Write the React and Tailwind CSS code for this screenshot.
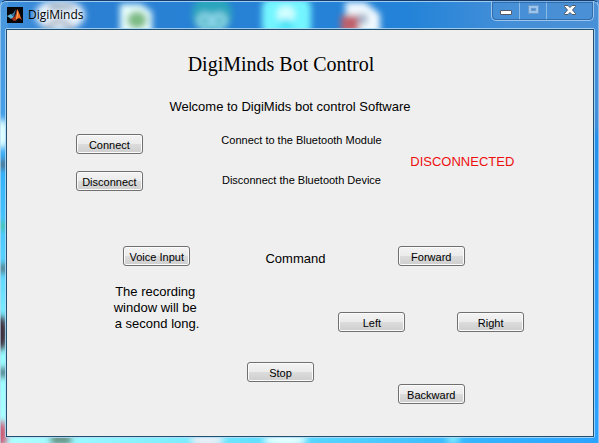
import React from "react";

const SANS = "font-['Liberation_Sans',Arial,sans-serif]";

function Wallpaper() {
  return (
    <svg
      className="absolute inset-0 h-full w-full"
      viewBox="0 0 599 443"
      preserveAspectRatio="none"
      aria-hidden="true"
    >
      <defs>
        <linearGradient id="top" x1="0" x2="1" y1="0" y2="0">
          <stop offset="0" stopColor="#3f8fdb" />
          <stop offset="0.15" stopColor="#2b80d3" />
          <stop offset="0.68" stopColor="#2383d8" />
          <stop offset="0.85" stopColor="#448fd8" />
          <stop offset="1" stopColor="#4a90d6" />
        </linearGradient>
        <linearGradient id="left" x1="0" x2="0" y1="0" y2="1">
          <stop offset="0" stopColor="#4a96dc" />
          <stop offset="0.26" stopColor="#469fe8" />
          <stop offset="0.4" stopColor="#35b4fb" />
          <stop offset="0.6" stopColor="#59d5ff" />
          <stop offset="0.78" stopColor="#93fbff" />
          <stop offset="1" stopColor="#b0ffff" />
        </linearGradient>
        <linearGradient id="right" x1="0" x2="0" y1="0" y2="1">
          <stop offset="0" stopColor="#4a90d6" />
          <stop offset="0.28" stopColor="#418fdb" />
          <stop offset="0.31" stopColor="#2590ea" />
          <stop offset="1" stopColor="#2ba3ff" />
        </linearGradient>
        <linearGradient id="bottom" x1="0" x2="1" y1="0" y2="0">
          <stop offset="0" stopColor="#b0ffff" />
          <stop offset="0.28" stopColor="#80eeff" />
          <stop offset="0.42" stopColor="#64e0ff" />
          <stop offset="0.6" stopColor="#4ecdff" />
          <stop offset="0.8" stopColor="#35b4ff" />
          <stop offset="1" stopColor="#2ba3ff" />
        </linearGradient>
        <filter id="soft" x="-50%" y="-50%" width="200%" height="200%">
          <feGaussianBlur stdDeviation="3" />
        </filter>
      </defs>
      <rect width="599" height="30" fill="url(#top)" />
      <rect y="0" width="8" height="443" fill="url(#left)" />
      <rect x="591" width="8" height="443" fill="url(#right)" />
      <rect x="4" y="434" width="595" height="9" fill="url(#bottom)" />
      <g filter="url(#soft)">
        <ellipse cx="60" cy="15" rx="25" ry="16" fill="#e9f3fc" />
        <path d="M45 31q14-20 28 0" fill="none" stroke="#a2acbb" strokeWidth="5" />
        <path d="M49 3l22 1 6 5-28 1z" fill="#92a8bd" />
        <path d="M120 4h21l11 8v22h-32z" fill="#e8fffd" />
        <ellipse cx="137" cy="20" rx="10" ry="9" fill="#7dbb84" />
        <circle cx="212" cy="14" r="20" fill="#29a5bd" />
        <circle cx="205" cy="21" r="6" fill="none" stroke="#93dceb" strokeWidth="5" />
        <circle cx="219" cy="21" r="6" fill="none" stroke="#93dceb" strokeWidth="5" />
        <rect x="262" y="-2" width="49" height="38" rx="9" fill="#73f5ff" />
        <ellipse cx="286" cy="14" rx="9" ry="8" fill="#d4ffff" />
        <path d="M276 29l10-12 10 12z" fill="#40e0f6" />
        <path d="M345 2h20l15 12v20h-33z" fill="#f0f9ff" />
        <rect x="341" y="15" width="18" height="18" fill="#c0616c" />
        <ellipse cx="363" cy="19" rx="5" ry="6" fill="#a6b6cc" />
        <ellipse cx="2" cy="134" rx="8" ry="15" fill="#e0ffff" />
        <rect x="-3" y="160" width="12" height="9" fill="#52768f" />
        <rect x="-3" y="222" width="10" height="8" fill="#49c6a8" />
        <rect x="-3" y="264" width="12" height="9" fill="#57808c" />
        <ellipse cx="0" cy="333" rx="8" ry="17" fill="#3c2836" />
        <rect x="-3" y="368" width="12" height="9" fill="#527e88" />
        <ellipse cx="1" cy="434" rx="6" ry="13" fill="#d2506a" />
        <rect x="51" y="435" width="20" height="9" fill="#65897a" />
        <ellipse cx="207" cy="440" rx="17" ry="7" fill="#e9eef5" />
        <ellipse cx="285" cy="440" rx="22" ry="7" fill="#e4ffff" />
        <ellipse cx="453" cy="439" rx="7" ry="6" fill="#7ee6ff" />
      </g>
    </svg>
  );
}

function MatlabIcon() {
  return (
    <svg className="h-4 w-4 shrink-0" viewBox="0 0 16 16" aria-hidden="true">
      <rect width="16" height="16" fill="#050508" />
      <path d="M0 9l4-2 3 3-3 2z" fill="#5cb3d5" />
      <path d="M4 7c2 0 3-2 5-5L7 10z" fill="#326f9a" />
      <path d="M4 12l3-2c2-1 2-6 3-8 1 2 1 6 0 8-1 2-2 4-3 4-1 0-1-2-3-2z" fill="#a53118" />
      <path d="M10 2c2 2 3 7 5 11-3-3-4-2-7 1 2-4 2-8 2-12z" fill="#ef6a22" />
      <path d="M10 3c1 3 1 6 0 8l-1 1c1-3 1-6 1-9z" fill="#ffd078" />
    </svg>
  );
}

function WindowControls() {
  return (
    <div className="flex h-5 w-[103px] shrink-0 rounded-b-[5px] border border-t-0 border-[#9bc5ee] bg-[#4a8fd5]/50 outline outline-[#285e96]/70 -outline-offset-2">
      <button type="button" aria-label="Minimize" className="flex w-7 items-end justify-center border-r border-[#8dbbe8] pb-1">
        <svg width="12" height="6" viewBox="0 0 12 6" aria-hidden="true">
          <rect x="0.5" y="0.5" width="11" height="4" rx="0.5" fill="#fff" stroke="#515a68" />
        </svg>
      </button>
      <button type="button" aria-label="Maximize" className="flex w-[27px] items-center justify-center border-r border-[#8dbbe8] pb-0.5">
        <svg width="11" height="9" viewBox="0 0 11 9" aria-hidden="true">
          <rect x="0.5" y="0.5" width="10" height="8" fill="#9bc5ed" stroke="#6d9bcb" />
          <rect x="3.5" y="3.5" width="4" height="2" fill="#438bd4" stroke="#6d9bcb" />
        </svg>
      </button>
      <button type="button" aria-label="Close" className="flex flex-1 items-center justify-center pb-0.5">
        <svg width="12" height="10" viewBox="0 0 12 10" aria-hidden="true">
          <path d="M0.5 0.5h3.5l2 2 2-2h3.5v1l-3 3.5 3 3.5v1H8l-2-2-2 2H0.5v-1l3-3.5-3-3.5z" fill="#fff" stroke="#515a68" />
        </svg>
      </button>
    </div>
  );
}

function PushButton({ children }) {
  return (
    <button
      type="button"
      className="flex h-5 w-[67px] shrink-0 items-center justify-center whitespace-nowrap rounded-[3px] border border-[#707070] bg-[linear-gradient(#f3f3f3_0%,#ebebeb_50%,#dcdcdc_50%,#cecece_100%)] pt-0.5 text-[11px] leading-4 text-black shadow-[inset_0_0_0_1px_#fbfbfb]"
    >
      {children}
    </button>
  );
}

export default function App() {
  return (
    <div className={`relative flex min-h-screen flex-col overflow-hidden bg-[#123055] text-black ${SANS}`}>
      <Wallpaper />
      <div className="relative flex flex-1 flex-col rounded-t-md border-x border-t border-t-[#173c6b] border-x-[#b9dcf5]/60 px-1 pb-[5px] shadow-[inset_0_1px_0_#9ccbf2]">
        <header className="flex h-[27px] items-start">
          <div className="flex flex-1 items-center gap-[5px] pl-0.5 pt-1.5">
            <MatlabIcon />
            <span className="font-['Open_Sans','Noto_Sans',sans-serif] text-[12px] leading-4">DigiMinds</span>
          </div>
          <WindowControls />
        </header>

        <div className="-mr-px flex flex-1 flex-col rounded-[2px] border border-[#b5dcf7]/80">
          <main className="flex-1 border border-[#24506f] bg-[#efefef]">
            <h1 className="pr-[38px] pt-[22px] text-center font-['Liberation_Serif','Times_New_Roman',serif] text-[20px] leading-6">
              DigiMinds Bot Control
            </h1>
            <p className="pr-5 pt-[23px] text-center text-[13px] leading-4">
              Welcome to DigiMids bot control Software
            </p>

            <section className="grid grid-cols-[69fr_133fr_186fr_16fr_183fr] pt-[17px]">
              <div className="col-start-2 flex flex-col gap-[17px] pt-0.5">
                <PushButton>Connect</PushButton>
                <PushButton>Disconnect</PushButton>
              </div>
              <div className="flex flex-col items-center gap-6 whitespace-nowrap text-[11px] leading-4">
                <p>Connect to the Bluetooth Module</p>
                <p>Disconnect the Bluetooth Device</p>
              </div>
              <p role="status" className="col-start-5 pt-[22px] text-[13px] leading-4 text-[#ed1010]">
                DISCONNECTED
              </p>
            </section>

            <section className="grid grid-cols-[93fr_114fr_9fr_116fr_186fr_69fr] pt-[55px]">
              <div className="col-start-2 flex flex-col items-center gap-[18px]">
                <PushButton>Voice Input</PushButton>
                <p className="whitespace-nowrap pr-[3px] text-center text-[13px] leading-4">
                  The recording
                  <br />
                  window will be
                  <br />
                  &nbsp;a second long.
                </p>
              </div>
              <div className="col-start-4 flex flex-col items-center gap-[95px] pt-[5px]">
                <p className="self-end pr-[13px] text-[13px] leading-4">Command</p>
                <PushButton>Stop</PushButton>
              </div>
              <div className="flex flex-col items-center">
                <PushButton>Forward</PushButton>
                <div className="flex w-full justify-between pb-[52px] pt-[46px]">
                  <PushButton>Left</PushButton>
                  <PushButton>Right</PushButton>
                </div>
                <PushButton>Backward</PushButton>
              </div>
            </section>
          </main>
        </div>
      </div>
    </div>
  );
}
